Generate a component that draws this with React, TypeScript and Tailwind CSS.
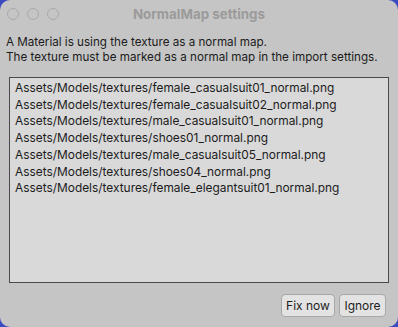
const files = [
  "Assets/Models/textures/female_casualsuit01_normal.png",
  "Assets/Models/textures/female_casualsuit02_normal.png",
  "Assets/Models/textures/male_casualsuit01_normal.png",
  "Assets/Models/textures/shoes01_normal.png",
  "Assets/Models/textures/male_casualsuit05_normal.png",
  "Assets/Models/textures/shoes04_normal.png",
  "Assets/Models/textures/female_elegantsuit01_normal.png",
];

export default function App() {
  return (
    <div className="h-[327px] w-[398px] bg-[#3a4cc0] font-['Inter','Liberation_Sans',sans-serif] text-[#1c1c1c]">
      <div className="flex h-full w-full flex-col rounded-[10px] bg-[#c5c5c5]">
        <div className="relative flex h-[28px] items-center justify-center">
          <div className="absolute left-[7px] top-[8px] flex gap-[8px]">
            <span className="h-[12px] w-[12px] rounded-full border border-[#a9a9a9]" />
            <span className="h-[12px] w-[12px] rounded-full border border-[#a9a9a9]" />
            <span className="h-[12px] w-[12px] rounded-full border border-[#a9a9a9]" />
          </div>
          <span className="text-[13.4px] font-bold text-[#9b9b9b]">NormalMap settings</span>
        </div>
        <div className="mt-[7px] px-[6px] text-[11.65px] leading-[15px]">
          <p>A Material is using the texture as a normal map.</p>
          <p>The texture must be marked as a normal map in the import settings.</p>
        </div>
        <div className="mx-[9px] mt-[12px] h-[206px] border border-[#4a4a4a] bg-[#d9d9d9] px-[5px] pt-[2px] text-[11.9px] leading-[16.7px]">
          {files.map((f) => (
            <div key={f}>{f}</div>
          ))}
        </div>
        <div className="mt-[11px] flex justify-end gap-[4px] pr-[12px]">
          <button className="h-[23px] w-[54px] rounded-[4px] border border-[#a8a8a8] bg-[#e3e3e3] text-[12px]">
            Fix now
          </button>
          <button className="h-[23px] w-[47px] rounded-[4px] border border-[#a8a8a8] bg-[#e3e3e3] text-[12px]">
            Ignore
          </button>
        </div>
      </div>
    </div>
  );
}
